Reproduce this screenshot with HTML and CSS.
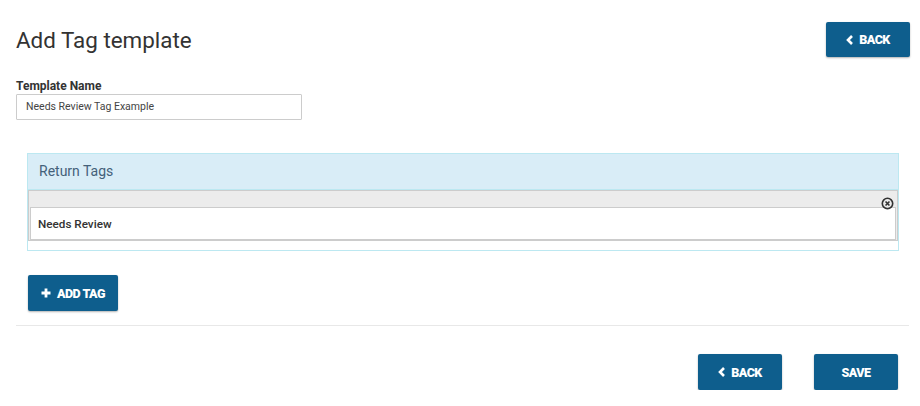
FILE: index.html
```html
<!DOCTYPE html>
<html>
<head>
<meta charset="utf-8">
<link rel="stylesheet" href="styles.css">
</head>
<body>
<div class="page">
  <div class="top">
    <h1 class="title">Add Tag template</h1>
    <button class="btn btn-back-top"><svg class="chev" viewBox="0 0 8 10" width="8" height="10"><path d="M6 1 L2 5 L6 9" fill="none" stroke="#fff" stroke-width="2.6"/></svg>BACK</button>
  </div>
  <label class="lbl">Template Name</label>
  <div class="input">Needs Review Tag Example</div>

  <div class="panel">
    <div class="panel-head">Return Tags</div>
    <div class="panel-body">
      <div class="tag">
        <div class="tag-bar">
          <svg class="close" viewBox="0 0 12 12" width="13" height="13"><circle cx="6" cy="6" r="4.8" fill="none" stroke="#333" stroke-width="1.5"/><path d="M4.2 4.2 L7.8 7.8 M7.8 4.2 L4.2 7.8" stroke="#333" stroke-width="1.5"/></svg>
        </div>
        <div class="tag-box">Needs Review</div>
      </div>
    </div>
  </div>

  <button class="btn btn-add"><svg class="plus" viewBox="0 0 10 10" width="10" height="10"><path d="M5 0.5 V9.5 M0.5 5 H9.5" stroke="#fff" stroke-width="2.8"/></svg>ADD TAG</button>
  <div class="rule"></div>
  <div class="footer">
    <button class="btn btn-foot"><svg class="chev" viewBox="0 0 8 10" width="8" height="10"><path d="M6 1 L2 5 L6 9" fill="none" stroke="#fff" stroke-width="2.6"/></svg>BACK</button>
    <button class="btn btn-foot">SAVE</button>
  </div>
</div>
</body>
</html>
```
FILE: styles.css
```css
* { box-sizing: border-box; }
html, body { margin: 0; padding: 0; background: #fff; }
body { font-family: Roboto, "Noto Sans", sans-serif; color: #333; }
.page { padding: 0 10px 0 16px; width: 920px; }
.top { display: flex; justify-content: space-between; align-items: flex-start; padding-top: 22px; height: 75px; }
.title { margin: 5px 0 0; font-size: 22.4px; font-weight: 400; color: #333; letter-spacing: 0; }
.btn {
  background: #0e5e8d; color: #fff; border: none; border-radius: 2px;
  font-family: Roboto, sans-serif; font-weight: 900; font-size: 12.5px;
  letter-spacing: -0.5px;
  display: inline-flex; align-items: center; justify-content: center;
  box-shadow: 0 1px 2px rgba(0,0,0,0.3); padding: 0; cursor: pointer;
}
.chev { margin-right: 5px; }
.plus { margin-right: 6px; }
.btn-back-top { width: 84px; height: 35px; margin-right: 0; }
.lbl { display: block; font-size: 12px; font-weight: 700; color: #333; margin: 4px 0 0; line-height: 15px; }
.input {
  width: 286px; height: 26px; border: 1px solid #ccc; border-radius: 1px;
  font-size: 10.5px; color: #444; padding: 0 9px; line-height: 24px; margin-top: 0;
}
.panel {
  margin: 33px 0 0 11px; width: 872px; height: 98px; border: 1px solid #bce8f1;
}
.panel-head {
  background: #d9edf7; height: 36px; border-bottom: 1px solid #bce8f1;
  font-size: 14px; color: #44617a; padding: 9px 11px 0;
}
.panel-body { padding: 0 0 9px 0; }
.tag { border: 1px solid #ccc; background: #ececec; margin: 0; width: 870px; }
.tag-bar { height: 16px; display: flex; justify-content: flex-end; align-items: flex-end; padding-right: 3px; }
.close { display: block; margin-bottom: -3px; }
.tag-box {
  background: #fff; border: 1px solid #ccc; height: 33px; margin: 0 0 0 1px; width: 866px;
  font-size: 11.7px; font-weight: 500; color: #333; padding: 9px 7px 0;
}
.btn-add { width: 90px; height: 36px; margin: 24px 0 0 12px; }
.rule { height: 1px; background: #e8e8e8; width: 893px; margin-top: 14px; }
.footer { display: flex; justify-content: flex-end; gap: 32px; padding: 28px 12px 0 0; }
.btn-foot { width: 84px; height: 36px; }
```
